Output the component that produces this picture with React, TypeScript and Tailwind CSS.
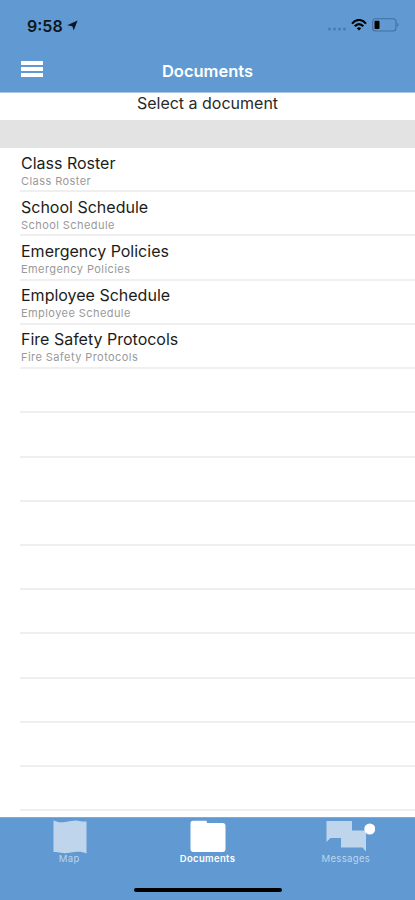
import React from 'react';

const documents = [
  'Class Roster',
  'School Schedule',
  'Emergency Policies',
  'Employee Schedule',
  'Fire Safety Protocols',
];

const EMPTY_ROWS = 10;

const StatusBar: React.FC = () => (
  <div className="flex h-[50px] items-center justify-between pl-[27px] pr-[16px] text-black">
    <div className="flex items-center gap-[4px]">
      <span className="mt-px text-[16px] font-semibold leading-5 text-[#0b1622]">9:58</span>
      <svg className="h-[11px] w-[11px]" viewBox="0 0 11 11" fill="#0b1622">
        <path d="M10.6 0.4 6.7 10.5 5.5 6.4 4.3 5.9 0.2 5.2Z" />
      </svg>
    </div>
    <div className="flex items-center">
      <svg className="mt-[7px] h-[4px] w-[20px]" viewBox="0 0 20 4" fill="#4a7cae">
        <circle cx="2.5" cy="2" r="1.5" />
        <circle cx="7.5" cy="2" r="1.5" />
        <circle cx="12.5" cy="2" r="1.5" />
        <circle cx="17.5" cy="2" r="1.5" />
      </svg>
      <svg className="ml-[4px] h-[12px] w-[16px]" viewBox="0 0 16 12" fill="none" stroke="currentColor" strokeWidth="2.2">
        <path d="M1 4.6C5-0.2 11-0.2 15 4.6" />
        <path d="M3.8 7.3C6.3 4.4 9.7 4.4 12.2 7.3" />
        <path d="M8 11.5 5.8 9.2C7 7.9 9 7.9 10.2 9.2Z" fill="currentColor" stroke="none" />
      </svg>
      <svg className="ml-[5px] h-[14px] w-[27px]" viewBox="0 0 27 14" fill="none">
        <rect x="0.6" y="0.8" width="23.4" height="12.2" rx="3" stroke="#42709f" strokeWidth="1.1" />
        <rect x="2.5" y="2.8" width="5" height="8.2" rx="1" fill="#000" />
        <path d="M25.2 4.8C26.8 5.5 26.8 8.3 25.2 9Z" fill="#42709f" />
      </svg>
    </div>
  </div>
);

const Header: React.FC = () => (
  <header className="h-[93px] shrink-0 border-b border-[#a9c8e6] bg-[#6199d2]">
    <StatusBar />
    <div className="grid h-[42px] grid-cols-[1fr_auto_1fr] items-center">
      <button aria-label="Menu" className="mb-[4px] ml-[21px] flex w-[22px] flex-col gap-[2px]">
        <span className="h-[4px] w-full bg-white" />
        <span className="h-[4px] w-full bg-white" />
        <span className="h-[4px] w-full bg-white" />
      </button>
      <h1 className="text-[16.5px] font-semibold text-white">Documents</h1>
    </div>
  </header>
);

const MapIcon: React.FC = () => (
  <svg className="h-[34px] w-[34px]" viewBox="0 0 34 34" fill="currentColor">
    <path d="M0.5 0.5C6 2.5 8 2.5 12 2 17 1.5 20 0.2 24 0.5 28 1.5 30 1.8 33.5 1.5V33.5C29 31.5 26 31.3 22 32 17 32.5 14 33.5 9 33 6 32.3 4 32 0.5 32Z" />
  </svg>
);

const FolderIcon: React.FC = () => (
  <svg className="h-[34px] w-[36px]" viewBox="0 0 36 34" fill="currentColor">
    <path d="M3 0.7H15.5C16.7 0.7 17 1.2 17 3H32.5C34.5 3 35.5 4 35.5 6V29C35.5 31 34.5 32 32.5 32H3.5C1.5 32 0.5 31 0.5 29V3.2C0.5 1.6 1.4 0.7 3 0.7Z" />
  </svg>
);

const MessagesIcon: React.FC = () => (
  <svg className="h-[34px] w-[50px]" viewBox="0 0 50 34">
    <path d="M1.5 1H27V10.5H41V31.5L37.5 27.5H16V18H5.5L1.5 22Z" fill="#bed5ec" />
    <circle cx="44.8" cy="9" r="5.5" fill="#fff" />
  </svg>
);

const TabBar: React.FC = () => (
  <nav className="h-[83px] shrink-0 border-t border-[#86a9cf] bg-[#6199d2]">
    <div className="grid h-[68px] grid-cols-3 pt-[2px] text-[9.5px] leading-[9px] tracking-[0.35px] text-[#bed5ec]">
      <button className="flex flex-col items-center justify-start">
        <span className="ml-[2px]">
          <MapIcon />
        </span>
        <span>Map</span>
      </button>
      <button className="flex flex-col items-center justify-start font-semibold text-white">
        <span className="ml-[2px]">
          <FolderIcon />
        </span>
        <span>Documents</span>
      </button>
      <button className="flex flex-col items-center justify-start">
        <span className="ml-[9px]">
          <MessagesIcon />
        </span>
        <span>Messages</span>
      </button>
    </div>
    <div className="mx-auto mt-[2px] h-[4px] w-[148px] rounded-full bg-black" />
  </nav>
);

const App: React.FC = () => {
  return (
    <div className="flex h-[900px] w-[415px] flex-col overflow-hidden bg-white font-['Inter',sans-serif]">
      <Header />
      <p className="h-[27px] shrink-0 text-center text-[16px] leading-[21px] text-[#2a2a2a]">Select a document</p>
      <div className="h-[28px] shrink-0 bg-[#e3e3e3]" />
      <main className="min-h-0 flex-1 overflow-hidden pl-[20px]">
        <ul>
          {documents.map((name) => (
            <li key={name} className="h-[44.22px] border-b-2 border-[#efefef] pl-px pt-[4.6px]">
              <div className="text-[16px] leading-[21px] text-[#1c1c1c]">{name}</div>
              <div className="text-[11px] leading-[15px] tracking-[0.43px] text-[#999]">{name}</div>
            </li>
          ))}
          {Array.from({ length: EMPTY_ROWS }, (_, i) => (
            <li key={i} className="h-[44.22px] border-b-2 border-[#efefef]" />
          ))}
        </ul>
      </main>
      <TabBar />
    </div>
  );
};

export default App;
